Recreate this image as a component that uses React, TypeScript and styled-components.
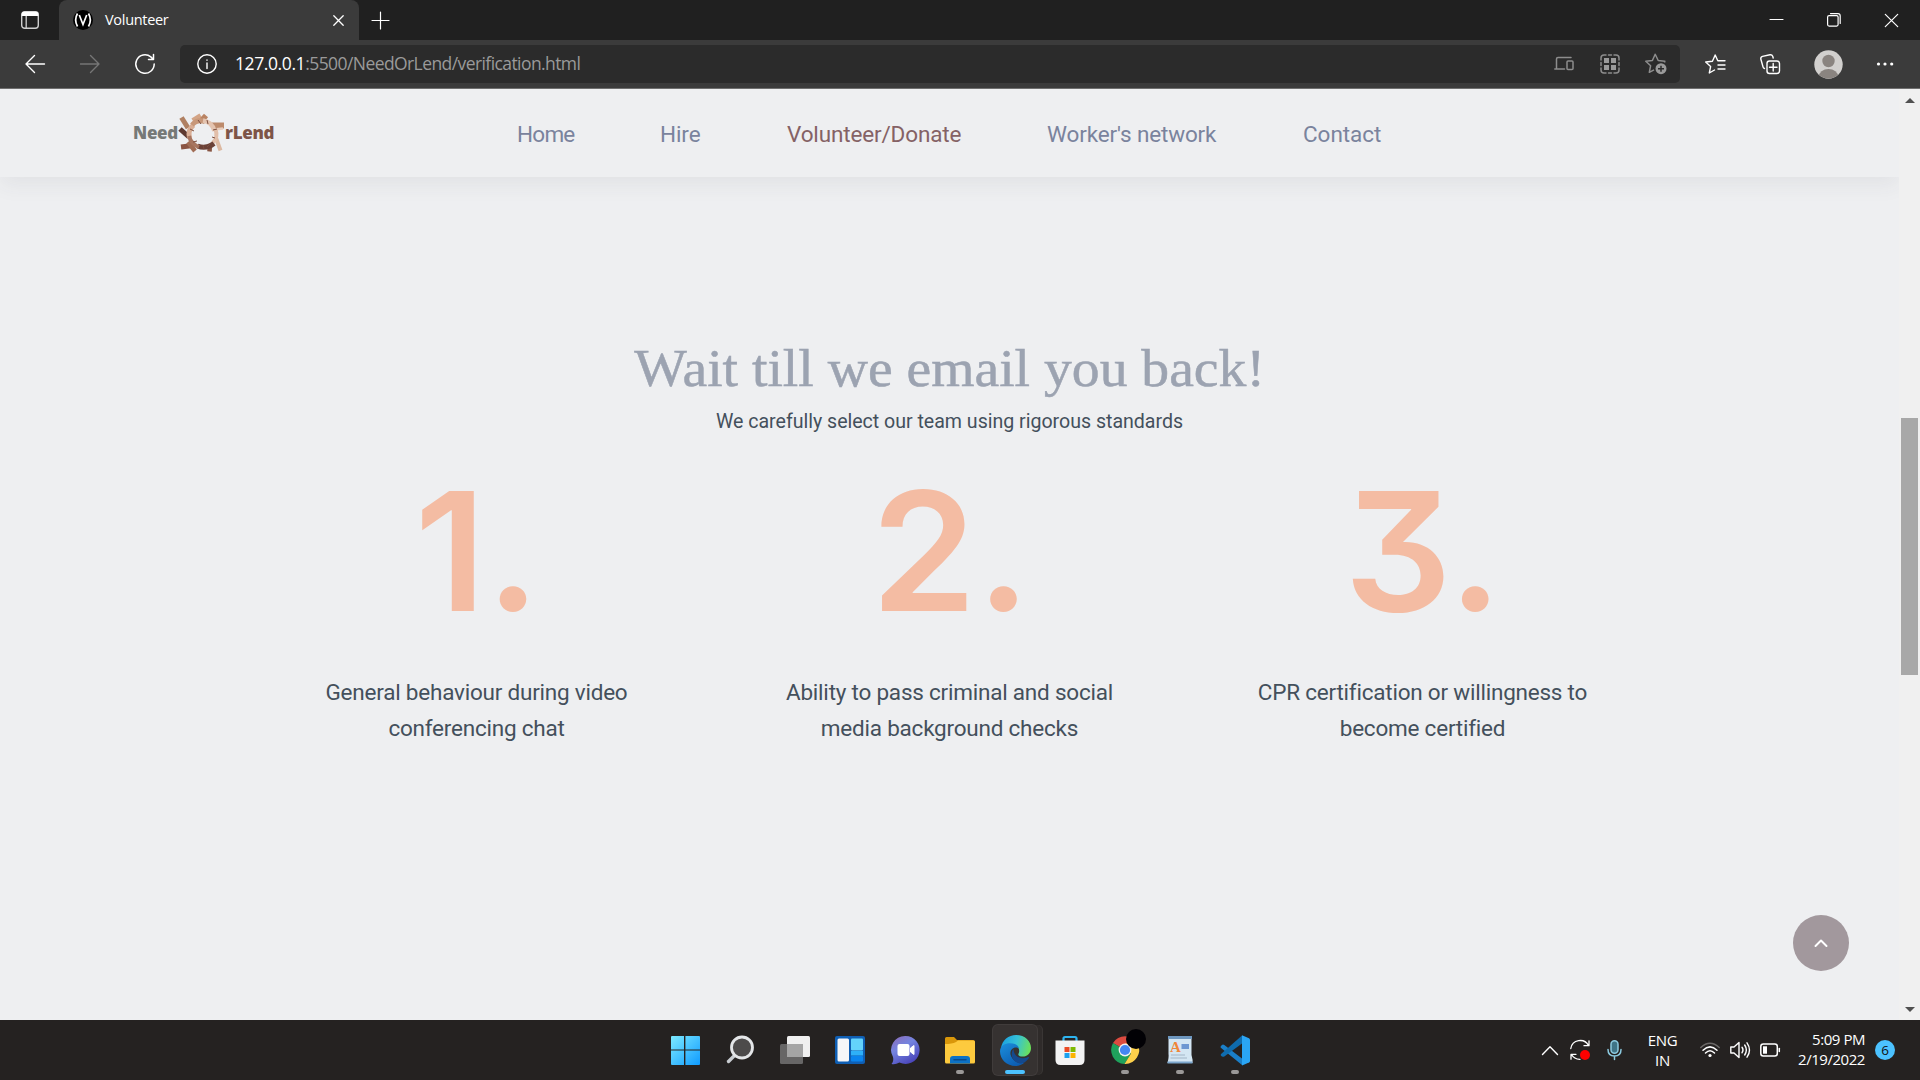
import React from "react";
import styled, { createGlobalStyle, css } from "styled-components";

const GlobalStyle = createGlobalStyle`
  * { box-sizing: border-box; }
  html, body { margin: 0; padding: 0; overflow: hidden; background: #eeeff1; }
  svg { display: block; flex: none; overflow: visible; }
`;

const uiFont = `"Open Sans", "Noto Sans", sans-serif`;
const siteFont = `Roboto, "Liberation Sans", sans-serif`;

const Screen = styled.div`
  width: 1920px;
  height: 1080px;
  display: flex;
  flex-direction: column;
  overflow: hidden;
  font-family: ${uiFont};
`;

/* ---------- browser chrome ---------- */

const TabStrip = styled.div`
  height: 40px;
  flex: none;
  display: flex;
  background: #202020;
  color: #fff;
`;

const TabActions = styled.div`
  width: 59px;
  display: flex;
  align-items: center;
  padding-left: 21px;
`;

const Tab = styled.div`
  width: 300px;
  height: 40px;
  display: flex;
  align-items: center;
  padding: 0 15px 0 14px;
  background: #3b3b3b;
  border-radius: 8px 8px 0 0;
`;

const TabTitle = styled.span`
  flex: 1;
  padding-left: 12px;
  font-size: 14.5px;
  letter-spacing: -0.3px;
  line-height: 20px;
  white-space: nowrap;
`;

const NewTab = styled.div`
  flex: 1;
  display: flex;
  align-items: center;
  padding-left: 13px;
`;

const WindowControls = styled.div`
  display: flex;
  align-items: center;
  gap: 44px;
  padding-right: 22px;
`;

const Toolbar = styled.div`
  height: 49px;
  flex: none;
  display: flex;
  align-items: center;
  background: #3b3b3b;
  border-bottom: 1px solid #6f6f6f;
`;

const NavButtons = styled.div`
  width: 180px;
  display: flex;
  gap: 35px;
  padding-left: 25px;
`;

const AddressBar = styled.div`
  width: 1500px;
  height: 38px;
  display: flex;
  align-items: center;
  padding: 0 13px 0 17px;
  background: #2b2b2b;
  border-radius: 5px;
`;

const Url = styled.div`
  flex: 1;
  padding: 0 0 2px 18px;
  font-size: 17.5px;
  letter-spacing: -0.58px;
  line-height: 24px;
  white-space: nowrap;
  color: #9a9a9a;
`;

const UrlHost = styled.span`
  color: #fff;
  letter-spacing: -0.4px;
`;

const AddressIcons = styled.div`
  display: flex;
  align-items: center;
  gap: 25.5px;
`;

const ToolbarIcons = styled.div`
  flex: 1;
  display: flex;
  align-items: center;
  padding-left: 25px;
`;

const IconSlot = styled.div<{ $w: number }>`
  width: ${(p) => p.$w}px;
  flex: none;
`;

/* ---------- page ---------- */

const Viewport = styled.div`
  height: 931px;
  flex: none;
  display: flex;
  position: relative;
`;

const Page = styled.div`
  width: 1899px;
  display: flex;
  flex-direction: column;
  background: #eeeff1;
  font-family: ${siteFont};
  overflow: hidden;
`;

const SiteHeader = styled.header`
  height: 88px;
  flex: none;
  display: flex;
  align-items: center;
  padding-left: 133px;
  background: #eeeff1;
  box-shadow: 0 8px 20px rgba(60, 66, 76, 0.065);
`;

const Logo = styled.div`
  width: 384px;
  display: flex;
  align-items: center;
  font-family: "Open Sans", sans-serif;
  font-weight: 800;
  font-size: 17px;
  line-height: 22px;
`;

const LogoWord = styled.span<{ $c: string; $w: number; $ls: number }>`
  width: ${(p) => p.$w}px;
  letter-spacing: ${(p) => p.$ls}px;
  color: ${(p) => p.$c};
  white-space: nowrap;
`;

const SiteNav = styled.nav`
  display: flex;
  gap: 86px;
  padding-top: 2px;
`;

const NavLink = styled.a<{ $w: number; $ls: number; $active?: boolean }>`
  width: ${(p) => p.$w}px;
  font-size: 22.5px;
  line-height: 28px;
  letter-spacing: ${(p) => p.$ls}px;
  white-space: nowrap;
  color: ${(p) => (p.$active ? "#856265" : "#7a839d")};
`;

const Content = styled.main`
  flex: 1;
  display: flex;
  flex-direction: column;
  align-items: center;
  padding-top: 160px;
`;

const Heading = styled.h1`
  margin: 0;
  font-family: "Liberation Serif", serif;
  font-weight: 400;
  font-size: 52px;
  line-height: 64px;
  color: #9ca3b1;
  -webkit-text-stroke: 0.5px #9ca3b1;
  white-space: nowrap;
  transform: scaleX(1.07);
`;

const Subtitle = styled.p`
  margin: 5px 0 0;
  font-size: 19.6px;
  line-height: 32px;
  letter-spacing: -0.02px;
  color: #44505c;
  white-space: nowrap;
`;

const Steps = styled.section`
  display: grid;
  grid-template-columns: repeat(3, 473px);
  margin-top: 13px;
`;

const Step = styled.article`
  display: flex;
  flex-direction: column;
  align-items: center;
`;

const StepNumber = styled.div`
  height: 200px;
  padding-left: 2px;
  font-family: Inter, sans-serif;
  font-size: 165px;
  font-weight: 600;
  line-height: 200px;
  font-feature-settings: "cv09" 1;
  color: #f4bca3;
  white-space: nowrap;
  transform: scaleX(1.025);
`;

const StepText = styled.p`
  margin: 23px 0 0;
  font-size: 22.5px;
  line-height: 36px;
  letter-spacing: -0.22px;
  text-align: center;
  color: #44505c;
  white-space: pre-line;
`;

const BackToTop = styled.button`
  position: absolute;
  left: 1793px;
  top: 826px;
  width: 56px;
  height: 56px;
  padding: 0;
  border: 0;
  border-radius: 50%;
  display: grid;
  place-items: center;
  background: #a2989d;
`;

const Scrollbar = styled.div`
  width: 21px;
  display: flex;
  flex-direction: column;
  align-items: center;
  padding: 9px 0 8px;
  background: #f0f0f0;
`;

const Thumb = styled.div`
  width: 17px;
  height: 257px;
  margin: 315px 0 auto;
  background: #a8a8a8;
`;

/* ---------- taskbar ---------- */

const Taskbar = styled.footer`
  height: 60px;
  flex: none;
  display: flex;
  background: #252221;
  color: #fff;
`;

const Apps = styled.div`
  display: flex;
  flex: 1;
  padding-left: 657px;
`;

const AppButton = styled.div`
  width: 55.1px;
  flex: none;
  display: flex;
  flex-direction: column;
  align-items: center;
  padding-top: 5px;
`;

const AppTile = styled.div<{ $active?: boolean }>`
  width: 44px;
  height: 50px;
  display: flex;
  flex-direction: column;
  align-items: center;
  justify-content: space-between;
  padding: 10px 0 1px;
  border-radius: 5px;
  ${(p) =>
    p.$active &&
    css`
      background: #363231;
      box-shadow: 0 0 0 1px #403c3b, 5px 0 0 0 #2f2b2a, 6px 0 0 0 #3a3635;
    `}
`;

const Indicator = styled.div<{ $active?: boolean }>`
  width: ${(p) => (p.$active ? 20 : 8)}px;
  height: 4px;
  border-radius: 2px;
  background: ${(p) => (p.$active ? "#4cc2ff" : "#9b9998")};
`;

const Tray = styled.div`
  width: 380px;
  display: flex;
  align-items: center;
  padding-left: 2px;
`;

const Language = styled.div`
  width: 81px;
  margin-right: -3px;
  font-size: 15px;
  line-height: 20px;
  letter-spacing: -0.3px;
  text-align: center;
  white-space: pre-line;
`;

const Clock = styled.div`
  width: 85px;
  font-size: 15px;
  line-height: 20px;
  letter-spacing: -0.45px;
  text-align: right;
  white-space: pre-line;
  margin-top: -2px;
`;

const Badge = styled.div`
  width: 20px;
  height: 20px;
  margin-left: 10px;
  border-radius: 50%;
  background: #4cc2ff;
  color: #111;
  font-size: 13.5px;
  line-height: 20px;
  text-align: center;
`;

/* ---------- drawings ---------- */

const Stroke = ({ w = 20, h = 20, c = "#fff", sw = 1.4, children }: any) => (
  <svg width={w} height={h} viewBox={`0 0 ${w} ${h}`} fill="none" stroke={c} strokeWidth={sw} strokeLinecap="round" strokeLinejoin="round">
    {children}
  </svg>
);

/* ring of joined hands and forearms */
const Wreath = () => (
  <svg width="46" height="38" viewBox="0 0 46 38">
    <g fill="none" strokeLinecap="butt">
      <path d="M2.500 3.500 9 14" stroke="#b08062" strokeWidth="5" />
      <path d="M1 15 10 23" stroke="#5d3930" strokeWidth="5" />
      <path d="M2 33 14 31.500" stroke="#8a5443" strokeWidth="5" />
      <path d="M14 7 22 2" stroke="#d3a486" strokeWidth="6" />
      <path d="M23 6 27 1.500" stroke="#b98363" strokeWidth="5.500" />
      <path d="M33 11.500H45" stroke="#bd8b6c" strokeWidth="6" />
      <path d="M35 15.500 44 14.500" stroke="#e9cebd" strokeWidth="2.500" />
      <path d="M37 24 41.500 36.500" stroke="#dcb9a2" strokeWidth="4" />
      <path d="M31 30 30.500 37.500" stroke="#875442" strokeWidth="4.500" />
      <path d="M9 28 16 37" stroke="#a16d55" strokeWidth="4.500" />
      <path d="M10.500 24Q8.500 16 14.500 11" stroke="#d9ae95" strokeWidth="5" />
      <path d="M13 11Q18 5 26 7.500" stroke="#c79779" strokeWidth="5" />
      <path d="M24 6.500Q33 8 35.500 17" stroke="#e4c4b0" strokeWidth="4.500" />
      <path d="M36.500 15Q39.500 24 33.500 29" stroke="#e2bfaa" strokeWidth="4" />
      <path d="M35 29.500Q27 35.500 18.500 32" stroke="#6b4137" strokeWidth="5" />
      <path d="M20 33Q12 30 10 22" stroke="#a87660" strokeWidth="4" />
      <path d="M11 15l4 2M19 6l3 4M28 6l1 4M34 16l4-1M14 28l4-1M24 31l1 4M31 30l-3 3M36 24l-3-1" stroke="#7d4f3f" strokeWidth="1" />
    </g>
  </svg>
);

const StartIcon = () => (
  <svg width="30" height="30" viewBox="0 0 30 30">
    <defs>
      <linearGradient id="win" x1="0" y1="0" x2="1" y2="1" gradientUnits="objectBoundingBox">
        <stop offset="0" stopColor="#7deaff" />
        <stop offset="1" stopColor="#0f9bff" />
      </linearGradient>
    </defs>
    <path fill="url(#win)" d="M2 1H14V14.4H1V2Q1 1 2 1ZM15.4 1H29Q30 1 30 2V14.4H15.4ZM1 15.6H14V30H2Q1 30 1 29ZM15.4 15.6H30V29Q30 30 29 30H15.4Z" />
  </svg>
);

const SearchIcon = () => (
  <svg width="30" height="30" viewBox="0 0 30 30">
    <path d="M10 20 3.500 26.500" stroke="#c9cdd1" strokeWidth="3.400" strokeLinecap="round" />
    <circle cx="17" cy="12.500" r="10.500" fill="#4d4b4b" stroke="#e4e6e8" strokeWidth="2.800" />
  </svg>
);

const TaskViewIcon = () => (
  <svg width="30" height="30" viewBox="0 0 30 30">
    <rect x="7" y="1" width="23" height="21" rx="1.500" fill="#f0f0f0" />
    <rect x="0" y="9" width="23" height="20" rx="1.500" fill="#6d6d6d" opacity=".92" />
    <path d="M7 9h16v13H7z" fill="#a5a5a5" />
  </svg>
);

const WidgetsIcon = () => (
  <svg width="30" height="30" viewBox="0 0 30 30">
    <rect x="0" y="1" width="30" height="28" rx="2" fill="#0f5fb4" />
    <rect x="2.500" y="3.500" width="11.500" height="23" rx="1.500" fill="#f5f6f8" />
    <rect x="16" y="3.500" width="12" height="12" rx="1" fill="#64d3fb" />
    <rect x="16" y="16" width="12" height="4.500" fill="#2eb0f8" />
    <rect x="16" y="21" width="12" height="5.500" rx="1" fill="#0a84ee" />
  </svg>
);

const ChatIcon = () => (
  <svg width="30" height="30" viewBox="0 0 30 30">
    <defs>
      <linearGradient id="chat" x1="0" y1="0" x2=".6" y2="1">
        <stop offset="0" stopColor="#8f6ab5" />
        <stop offset=".45" stopColor="#7484e0" />
        <stop offset="1" stopColor="#4b46bb" />
      </linearGradient>
    </defs>
    <path d="M15.500 1a14 14 0 1 1-6 26.600Q5 30 1.500 29 4 26 3 22A14 14 0 0 1 15.500 1Z" fill="url(#chat)" />
    <rect x="7.500" y="9" width="12" height="12" rx="2" fill="#fff" />
    <path d="M20.500 13 24 10.500V19.500L20.500 17Z" fill="#fff" stroke="#fff" strokeLinejoin="round" />
  </svg>
);

const FolderIcon = () => (
  <svg width="30" height="30" viewBox="0 0 30 30">
    <path d="M0 3.500Q0 2 1.500 2H9L12 5H28Q30 5 30 7V12H0Z" fill="#d9970a" />
    <path d="M0 9Q7 9 11 7L13 5.500H28.500Q30 5.500 30 7V27Q30 28.500 28.500 28.500H1.500Q0 28.500 0 27Z" fill="#fdca3e" />
    <path d="M5 28.500V24Q5 21 8 21H22Q25 21 25 24V28.500Z" fill="#0c72c6" />
    <path d="M9 24.700H21" stroke="#0a4a8b" strokeWidth="1.500" strokeLinecap="round" />
  </svg>
);

const EdgeIcon = () => (
  <svg width="31" height="31" viewBox="0 0 32 32">
    <defs>
      <linearGradient id="edgeTop" x1="0" y1=".3" x2="1" y2=".5">
        <stop offset="0" stopColor="#1a9fe0" />
        <stop offset=".5" stopColor="#35c1d8" />
        <stop offset="1" stopColor="#6be05a" />
      </linearGradient>
      <linearGradient id="edgeLow" x1="0" y1="0" x2=".7" y2="1">
        <stop offset="0" stopColor="#1c8fdc" />
        <stop offset="1" stopColor="#0c5bb0" />
      </linearGradient>
    </defs>
    <path d="M1 14C2 5 9 0 16.500 0 26 0 32 6.500 32 13.500 32 19 28 22.300 23.500 22.300 20 22.300 18.300 20.800 19 19.500 21.500 15 18 9.500 11.500 9.500 6 9.500 2 11.500 1 14Z" fill="url(#edgeTop)" />
    <path d="M0 17C0 11 5 8.500 10.500 8.500 15.500 8.500 18.500 10.500 19.500 13.500 13 11 9 17 11.500 22 13.500 27 19 30 25.500 28.500 22.500 31 19 32 16 32 7 32 0 25 0 17Z" fill="url(#edgeLow)" />
    <path d="M14 14.500C10.500 18 11 28.500 22 29.500 25.500 28.800 28 26.500 30 23.500 30 22.500 29 22.700 28 23.200 22 25.500 14 23 14 14.500Z" fill="#14498e" />
  </svg>
);

const StoreIcon = () => (
  <svg width="30" height="30" viewBox="0 0 30 30">
    <path d="M8.500 7V3.500Q8.500 2 10 2H20Q21.500 2 21.500 3.500V7" stroke="#2db4f0" strokeWidth="2.200" fill="none" />
    <path d="M0.500 5.500H29.500V25Q29.500 30 24.500 30H5.500Q.5 30 .5 25Z" fill="#f3f3f3" />
    <path d="M9.500 12h5v5h-5z" fill="#ea4b25" />
    <path d="M15.500 12h5v5h-5z" fill="#7eb900" />
    <path d="M9.500 18h5v5h-5z" fill="#1ba0ee" />
    <path d="M15.500 18h5v5h-5z" fill="#fcb400" />
  </svg>
);

const ChromeIcon = () => (
  <svg width="30" height="30" viewBox="0 0 30 30">
    <path d="M15 15 3 8A14 14 0 0 1 27 8Z" fill="#dc4b40" />
    <path d="M15 15 3 8A14 14 0 0 0 14.500 29L21 18.500Z" fill="#1fa25c" />
    <path d="M15 15 21 18.500 14.500 29A14 14 0 0 0 27.500 8.500H15Z" fill="#fdd04b" />
    <circle cx="15" cy="15" r="6.400" fill="#f2f2f2" />
    <circle cx="15" cy="15" r="5.100" fill="#4486f4" />
    <circle cx="26" cy="4" r="10" fill="#020105" />
  </svg>
);

const WordPadIcon = () => (
  <svg width="30" height="30" viewBox="0 0 30 30">
    <path d="M3.500 2H26.500V20Q28 25 27.500 28H2.500Q4 22 3.500 19Z" fill="#d4e6f3" />
    <path d="M3 1H27V4H3Z" fill="#6e97bf" />
    <path d="M2.500 26.500H27.500V28.500H2.500Z" fill="#7ba5cb" />
    <text x="5" y="17" fontFamily="Liberation Serif, serif" fontWeight="700" fontSize="15" fill="#f0863a">A</text>
    <path d="M16.500 9h7.500v5h-7.500z" fill="#6d97d2" />
    <path d="M6 20H20M5.500 23H22" stroke="#a3b6c8" strokeWidth="1" />
  </svg>
);

const CodeIcon = () => (
  <svg width="31" height="31" viewBox="0 0 31 31">
    <path d="M.8 11.200Q2.500 8.500 4.300 10L22 23.500V30L.8 12.800Q.2 12 .8 11.200Z" fill="#1a7fc8" />
    <path d="M.8 19.300 22 .5V8.500L4.300 21.500Q2.500 22.500 .8 20.500Z" fill="#0f6cae" />
    <path d="M22 .3 29 3.200Q30 3.700 30 5V26Q30 27 29 27.500L22 30.500Z" fill="#2aa5f4" />
  </svg>
);

const apps: { icon: React.ReactNode; state?: "open" | "active" }[] = [
  { icon: <StartIcon /> },
  { icon: <SearchIcon /> },
  { icon: <TaskViewIcon /> },
  { icon: <WidgetsIcon /> },
  { icon: <ChatIcon /> },
  { icon: <FolderIcon />, state: "open" },
  { icon: <EdgeIcon />, state: "active" },
  { icon: <StoreIcon /> },
  { icon: <ChromeIcon />, state: "open" },
  { icon: <WordPadIcon />, state: "open" },
  { icon: <CodeIcon />, state: "open" },
];

const links = [
  { label: "Home", w: 57, ls: -0.75 },
  { label: "Hire", w: 41, ls: -0.1 },
  { label: "Volunteer/Donate", w: 174, ls: -0.15, active: true },
  { label: "Worker's network", w: 170, ls: -0.15 },
  { label: "Contact", w: 78, ls: -0.05 },
];

const steps = [
  { n: "1.", text: "General behaviour during video\nconferencing chat" },
  { n: "2.", text: "Ability to pass criminal and social\nmedia background checks" },
  { n: "3.", text: "CPR certification or willingness to\nbecome certified" },
];

export default function App() {
  return (
    <Screen>
      <GlobalStyle />
      <TabStrip>
        <TabActions>
          <svg width="18" height="18" viewBox="0 0 18 18">
            <rect x=".7" y=".7" width="16.600" height="16.600" rx="3" fill="none" stroke="#cfcfcf" strokeWidth="1.400" />
            <path d="M.7 5V3Q.7 .7 3 .7H15Q17.300 .7 17.300 3V5Z" fill="#fff" />
            <path d="M5.200 5V17" stroke="#cfcfcf" strokeWidth="1.300" />
          </svg>
        </TabActions>
        <Tab>
          <svg width="20" height="20" viewBox="0 0 20 20">
            <circle cx="10" cy="10" r="10" fill="#000" />
            <path d="M4.500 3.500Q.8 10 4.500 16.500M15.500 3.500Q19.200 10 15.500 16.500M6.300 5 10 14.500 13.700 5" fill="none" stroke="#fff" strokeWidth="1.700" />
          </svg>
          <TabTitle>Volunteer</TabTitle>
          <Stroke w={11} h={11} sw={1.3}><path d="M.8.8 10.200 10.200M10.200.8.8 10.200" /></Stroke>
        </Tab>
        <NewTab>
          <Stroke w={17} h={17} sw={1.2}><path d="M8.500 0V17M0 8.500H17" /></Stroke>
        </NewTab>
        <WindowControls>
          <Stroke w={13} h={14} sw={1.1}><path d="M0 6.500H13" /></Stroke>
          <Stroke w={14} h={14} sw={1.2}>
            <rect x=".6" y="2.600" width="10.500" height="10.500" rx="1.500" />
            <path d="M3.500.6H11Q13.200.6 13.200 3V10.500" />
          </Stroke>
          <Stroke w={13} h={13} sw={1.2}><path d="M.3.3 12.700 12.700M12.700.3.3 12.700" /></Stroke>
        </WindowControls>
      </TabStrip>

      <Toolbar>
        <NavButtons>
          <Stroke><path d="M19.500 10H1M9.500 1.500 1 10 9.500 18.500" /></Stroke>
          <Stroke c="#767676"><path d="M.5 10H19M10.500 1.500 19 10 10.500 18.500" /></Stroke>
          <Stroke sw={1.500}><path d="M19.200 10A9.200 9.200 0 1 1 15.800 2.900L18.200 5.200M18.500 .5V5.500H13.500" /></Stroke>
        </NavButtons>
        <AddressBar>
          <Stroke sw={1.400}>
            <circle cx="10" cy="10" r="9.200" />
            <path d="M10 9V14.500M10 6V6.200" />
          </Stroke>
          <Url><UrlHost>127.0.0.1</UrlHost>:5500/NeedOrLend/verification.html</Url>
          <AddressIcons>
            <Stroke c="#8d8d8d" sw={1.500}>
              <path d="M2.500 14V5Q2.500 3.500 4 3.500H17M.8 15H10.500" />
              <rect x="13" y="7" width="6" height="8.500" rx="1" />
            </Stroke>
            <Stroke c="#8d8d8d" sw={1.500}>
              <path d="M1 6V4Q1 1 4 1H6M14 1H16Q19 1 19 4V6M19 14V16Q19 19 16 19H14M6 19H4Q1 19 1 16V14M8.500 1h3M8.500 19h3M1 8.500v3M19 8.500v3" />
              <path d="M4 4h5v5H4zM11 4h5v5h-5zM4 11h5v5H4zM11 11h5v5h-5z" fill="#9a9a9a" stroke="none" />
            </Stroke>
            <svg width="22" height="22" viewBox="0 0 22 22" fill="none" stroke="#8d8d8d" strokeWidth="1.500" strokeLinejoin="round">
              <path d="M19.500 9.500 19.800 8.300 13.200 7.500 10.200 1.200 7.400 7.500 .8 8.300 5.600 12.800 4.300 19.300 9 16.800" />
              <circle cx="16" cy="15.700" r="5.500" fill="#9a9a9a" stroke="none" />
              <path d="M16 12.700v6M13 15.700h6" stroke="#2b2b2b" />
            </svg>
          </AddressIcons>
        </AddressBar>
        <ToolbarIcons>
          <IconSlot $w={55}>
            <Stroke sw={1.400}>
              <path d="M14 6.800 12.800 6.800 10.200 1 7.400 7.200 .7 8 5.600 12.600 4.300 19 9.500 16M14 6.800H20M13 11H20M13 15H20" />
            </Stroke>
          </IconSlot>
          <IconSlot $w={54}>
            <Stroke sw={1.400}>
              <rect x="7" y="7" width="12.500" height="12.500" rx="2.500" />
              <path d="M13.200 9.500v7.500M9.500 13.200H17M4.500 14.500Q3.200 14 3 12.800L.8 5Q.5 3 2.500 2.400L10 .8Q12 .5 12.700 2.300L13.200 4" />
            </Stroke>
          </IconSlot>
          <IconSlot $w={62}>
            <svg width="29" height="29" viewBox="0 0 29 29">
              <defs><clipPath id="face"><circle cx="14.500" cy="14.500" r="14" /></clipPath></defs>
              <circle cx="14.500" cy="14.500" r="14.200" fill="#d2d0ce" />
              <g clipPath="url(#face)" fill="#8a8480">
                <circle cx="14.500" cy="11" r="6.200" />
                <ellipse cx="14.500" cy="27" rx="9.800" ry="8" />
              </g>
            </svg>
          </IconSlot>
          <svg width="18" height="4" viewBox="0 0 18 4" fill="#fff">
            <circle cx="2.500" cy="2" r="1.600" /><circle cx="9" cy="2" r="1.600" /><circle cx="15.700" cy="2" r="1.600" />
          </svg>
        </ToolbarIcons>
      </Toolbar>

      <Viewport>
        <Page>
          <SiteHeader>
            <Logo>
              <LogoWord $c="#767977" $w={46} $ls={-0.3}>Need</LogoWord>
              <Wreath />
              <LogoWord $c="#7e5548" $w={50} $ls={-0.3}>rLend</LogoWord>
            </Logo>
            <SiteNav>
              {links.map((l) => (
                <NavLink key={l.label} $w={l.w} $ls={l.ls} $active={l.active}>{l.label}</NavLink>
              ))}
            </SiteNav>
          </SiteHeader>
          <Content>
            <Heading>Wait till we email you back!</Heading>
            <Subtitle>We carefully select our team using rigorous standards</Subtitle>
            <Steps>
              {steps.map((s) => (
                <Step key={s.n}>
                  <StepNumber>{s.n}</StepNumber>
                  <StepText>{s.text}</StepText>
                </Step>
              ))}
            </Steps>
          </Content>
        </Page>
        <Scrollbar>
          <svg width="10" height="5" viewBox="0 0 10 5"><path d="M5 0 10 5H0Z" fill="#505050" /></svg>
          <Thumb />
          <svg width="10" height="5" viewBox="0 0 10 5"><path d="M0 0H10L5 5Z" fill="#505050" /></svg>
        </Scrollbar>
        <BackToTop aria-label="Back to top">
          <Stroke w={14} h={8} sw={2}><path d="M1.500 7 7 1.500 12.500 7" /></Stroke>
        </BackToTop>
      </Viewport>

      <Taskbar>
        <Apps>
          {apps.map((a, i) => (
            <AppButton key={i}>
              <AppTile $active={a.state === "active"}>
                {a.icon}
                {a.state && <Indicator $active={a.state === "active"} />}
              </AppTile>
            </AppButton>
          ))}
        </Apps>
        <Tray>
          <IconSlot $w={28}><Stroke w={16} h={9}><path d="M.5 8.500 8 .8 15.500 8.500" /></Stroke></IconSlot>
          <IconSlot $w={37}>
            <Stroke w={20} h={20} sw={1.300}>
              <path d="M.8 8.500A9.500 9.500 0 0 1 18.500 5.500M19 .8V5.700H14M1 19.200V14.300H6M1.500 14.500A9.500 9.500 0 0 0 10 19.300" />
              <circle cx="15" cy="15" r="5" fill="#f00" stroke="none" />
            </Stroke>
          </IconSlot>
          <IconSlot $w={15}>
            <Stroke w={15} h={20} c="#8ccbe0" sw={1.500}>
              <rect x="4" y=".8" width="7" height="12.500" rx="3.500" fill="#3f7486" />
              <path d="M1 9.500Q1 16 7.500 16T14 9.500M7.500 16V19.500" />
            </Stroke>
          </IconSlot>
          <Language>{"ENG\nIN"}</Language>
          <IconSlot $w={30}>
            <Stroke w={20} h={16} sw={1.500}>
              <path d="M.8 5.500Q10-3 19.200 5.500" stroke="#6b6867" />
              <path d="M3 8.200Q10 1.500 17 8.200M5.500 11Q10 6.500 14.500 11" />
              <circle cx="10" cy="13.500" r="1.600" fill="#fff" stroke="none" />
            </Stroke>
          </IconSlot>
          <IconSlot $w={30}>
            <Stroke w={20} h={18} sw={1.400}>
              <path d="M.8 6H4L9 1.500V16.500L4 12H.8ZM12 6.200Q14 9 12 11.800M14.700 4Q18 9 14.700 14M17 1.800Q22 9 17 16.200" />
            </Stroke>
          </IconSlot>
          <IconSlot $w={20}>
            <Stroke w={20} h={14} sw={1.500}>
              <rect x=".8" y="1" width="16.500" height="12" rx="2.500" />
              <path d="M19.300 5.500V8.500" />
              <rect x="3" y="3.300" width="4" height="7.400" fill="#fff" stroke="none" />
            </Stroke>
          </IconSlot>
          <Clock>{"5:09 PM\n2/19/2022"}</Clock>
          <Badge>6</Badge>
        </Tray>
      </Taskbar>
    </Screen>
  );
}
